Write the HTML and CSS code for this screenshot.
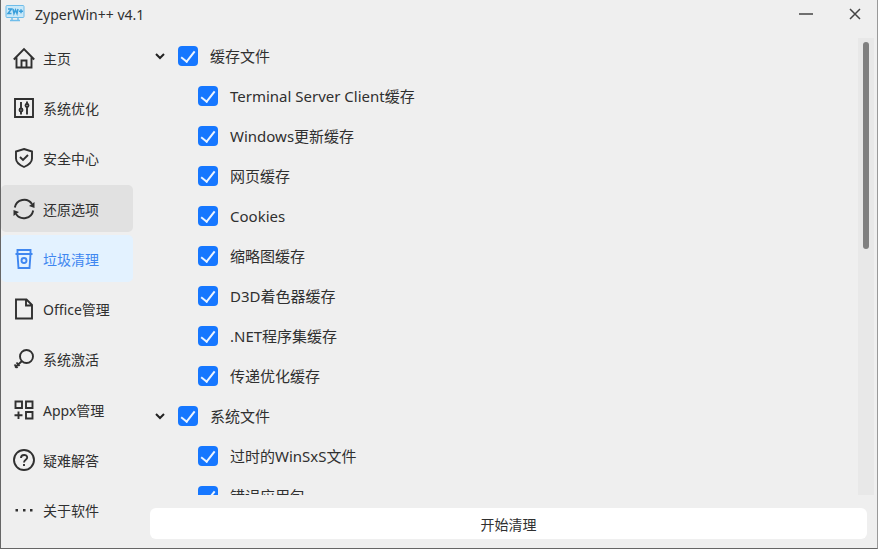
FILE: index.html
```html
<!DOCTYPE html>
<html lang="zh-CN">
  <head>
    <meta charset="UTF-8" />
    <title>ZyperWin++ v4.1</title>
    <link rel="stylesheet" href="styles.css">
  </head>
  <body>
    <div class="window">
      <header class="titlebar">
        <svg class="logo" viewBox="0 0 20 20">
          <rect x="1" y="1.500" width="18" height="12" rx="1" fill="#c9e8f8" stroke="#6fbdea" />
          <path d="M3 5h3.500L3 9.500h3.500M8 5l1 4.500 1.500-3.500 1.500 3.500 1-4.500M14 7.300h4M16 5.300v4" fill="none" stroke="#3a9fdb" stroke-width="1.500" />
          <path d="M7 14v3M13 14v3M5 16.500h10" fill="none" stroke="#6fbdea" stroke-width="1.500" />
        </svg>
        <span class="title">ZyperWin++ v4.1</span>
        <button class="win-btn" aria-label="最小化">
          <svg viewBox="0 0 14 14"><path d="M0 7h14" /></svg>
        </button>
        <button class="win-btn" aria-label="关闭">
          <svg viewBox="0 0 14 14"><path d="M2 2l10 10M12 2L2 12" /></svg>
        </button>
      </header>

      <div class="body">
        <nav class="sidebar">
          <a class="nav-item" href="#home">
            <svg class="icon" viewBox="0 0 22 22"><path d="M.8 12.500L11 2l10.200 10.500M3.500 10.500V20.500h15V10.500M8.500 20.500v-7h5v7" /></svg>
            主页
          </a>
          <a class="nav-item" href="#optimize">
            <svg class="icon" viewBox="0 0 22 22"><path d="M2 2h18v18H2zM8 5v6M8 15v2.500M14 4.500v2.500M14 10v7.500" /><circle cx="8" cy="13" r="1.500" /><circle cx="14" cy="8.500" r="1.500" /></svg>
            系统优化
          </a>
          <a class="nav-item" href="#security">
            <svg class="icon" viewBox="0 0 22 22"><path d="M11 2l8 2.500v7c0 4-3.500 6.500-8 8.500-4.500-2-8-4.500-8-8.500v-7zM7 10l3 3 5-5" /></svg>
            安全中心
          </a>
          <a class="nav-item hover" href="#restore">
            <svg class="icon" viewBox="0 0 22 22"><path d="M1.800 9.500A9.500 9.500 0 0 1 19 6M20.200 12.500A9.500 9.500 0 0 1 3 16" /><path class="solid" d="M21.500 4v6l-5.500-2zM.5 18v-6l5.500 2z" /></svg>
            还原选项
          </a>
          <a class="nav-item active" href="#clean">
            <svg class="icon" viewBox="0 0 22 22"><path d="M4.500 6V2h13v4M2.500 6h17M4.500 6l1 14h11l1-14" /><circle cx="11" cy="12.500" r="2.500" /></svg>
            垃圾清理
          </a>
          <a class="nav-item" href="#office">
            <svg class="icon" viewBox="0 0 22 22"><path d="M3 1.500h10.500l5.500 5.500v13.500H3zM13 1.500V7.500h6" /></svg>
            Office管理
          </a>
          <a class="nav-item" href="#activate">
            <svg class="icon" viewBox="0 0 22 22"><circle cx="13.500" cy="8.500" r="6.500" /><path d="M9 13l-7 6.500M3.500 14.500l3 3.500M1.500 16.500l3 3.500" /></svg>
            系统激活
          </a>
          <a class="nav-item" href="#appx">
            <svg class="icon" viewBox="0 0 22 22"><path d="M2.500 2.500h6.500v6.500H2.500zM13 2.500h6.500v6.500H13zM13 13h6.500v6.500H13zM1.500 16.250h8M5.500 12.500v7.500" /></svg>
            Appx管理
          </a>
          <a class="nav-item" href="#help">
            <svg class="icon" viewBox="0 0 22 22"><circle cx="11" cy="11" r="10" /><path d="M8 9c0-4 6.200-4 6.200-.5 0 2.300-3.200 2.300-3.200 5M11 15v2" /></svg>
            疑难解答
          </a>
          <a class="nav-item" href="#about">
            <svg class="icon" viewBox="0 0 22 22"><path class="solid" d="M2.500 10h2.500v2.500H2.500zM10 10h2.500v2.500H10zM17 10h2.500v2.500H17z" /></svg>
            关于软件
          </a>
        </nav>

        <main class="content">
          <div class="panel">
            <div class="tree">
              <div class="row group">
                <svg class="arrow" viewBox="0 0 10 10"><path d="M1 3l4 4 4-4" /></svg>
                <label><input type="checkbox" checked />缓存文件</label>
              </div>
              <div class="row"><label><input type="checkbox" checked />Terminal Server Client缓存</label></div>
              <div class="row"><label><input type="checkbox" checked />Windows更新缓存</label></div>
              <div class="row"><label><input type="checkbox" checked />网页缓存</label></div>
              <div class="row"><label><input type="checkbox" checked />Cookies</label></div>
              <div class="row"><label><input type="checkbox" checked />缩略图缓存</label></div>
              <div class="row"><label><input type="checkbox" checked />D3D着色器缓存</label></div>
              <div class="row"><label><input type="checkbox" checked />.NET程序集缓存</label></div>
              <div class="row"><label><input type="checkbox" checked />传递优化缓存</label></div>
              <div class="row group">
                <svg class="arrow" viewBox="0 0 10 10"><path d="M1 3l4 4 4-4" /></svg>
                <label><input type="checkbox" checked />系统文件</label>
              </div>
              <div class="row"><label><input type="checkbox" checked />过时的WinSxS文件</label></div>
              <div class="row"><label><input type="checkbox" checked />错误应用包</label></div>
            </div>
            <div class="scrollbar"><div class="thumb"></div></div>
          </div>
          <button class="start-btn">开始清理</button>
        </main>
      </div>
    </div>
  </body>
</html>
```
FILE: styles.css
```css
:root {
  --bg: #efefef;
  --text: #303030;
  --blue: #1677ff;
}

* {
  box-sizing: border-box;
}

body {
  margin: 0;
  font-family: "Noto Sans", "Noto Sans CJK SC", sans-serif;
  font-size: 14px;
  color: var(--text);
}

.window {
  display: flex;
  flex-direction: column;
  height: 100vh;
  background: var(--bg);
  border: 1px solid #666;
  border-top: none;
  border-right-color: #999;
  overflow: hidden;
}

.titlebar {
  display: flex;
  align-items: center;
  height: 28px;
  padding-left: 4px;
  flex-shrink: 0;
}

.logo {
  width: 20px;
  height: 20px;
  margin-right: 10px;
}

.title {
  flex: 1;
}

.win-btn {
  width: 49px;
  height: 28px;
  padding: 0 0 0 4px;
  border: none;
  background: none;
}

.win-btn svg {
  display: block;
  width: 14px;
  height: 14px;
  margin: auto;
  fill: none;
  stroke: #444;
  stroke-width: 1.5;
}

.body {
  display: flex;
  flex: 1;
  min-height: 0;
}

.sidebar {
  display: flex;
  flex-direction: column;
  gap: 3px;
  width: 132px;
  padding: 6px 0 14px;
}

.nav-item {
  display: flex;
  flex: 1;
  align-items: center;
  gap: 8px;
  padding-left: 12px;
  border-radius: 5px;
  color: var(--text);
  text-decoration: none;
}

.nav-item.hover {
  background: #e1e1e1;
}

.nav-item.active {
  background: #e3f2ff;
  color: #3f87f0;
}

.icon {
  width: 22px;
  height: 22px;
  fill: none;
  stroke: currentColor;
  stroke-width: 1.9;
}

.icon .solid {
  fill: currentColor;
  stroke: none;
}

.content {
  display: flex;
  flex: 1;
  flex-direction: column;
  min-width: 0;
  padding: 8px 3px 9px 17px;
}

.panel {
  display: flex;
  flex: 1;
  min-height: 0;
}

.tree {
  flex: 1;
  overflow: hidden;
  font-size: 15px;
}

.row {
  display: flex;
  align-items: center;
  height: 40px;
  padding-left: 48px;
}

.row.group {
  padding-left: 5px;
  gap: 13px;
}

.row label {
  display: flex;
  align-items: center;
  gap: 12px;
  line-height: 20px;
}

.arrow {
  width: 10px;
  height: 10px;
  fill: none;
  stroke: #222;
  stroke-width: 2;
}

input[type="checkbox"] {
  appearance: none;
  position: relative;
  width: 20px;
  height: 20px;
  margin: 0;
  border-radius: 4px;
  background: var(--blue);
}

input[type="checkbox"]:not(:checked) {
  background: white;
  border: 1px solid #bbb;
}

input[type="checkbox"]:checked::after {
  content: "";
  position: absolute;
  left: 6px;
  top: 2px;
  width: 6px;
  height: 12px;
  border: solid #eef5ff;
  border-width: 0 2px 2px 0;
  transform: rotate(38deg);
}

.scrollbar {
  width: 16px;
  margin-top: 2px;
  padding: 4px 5px;
  background: #e8e8e8;
}

.thumb {
  height: 46%;
  border-radius: 3px;
  background: #808080;
}

.start-btn {
  height: 31px;
  margin: 13px 7px 0 0;
  border: none;
  border-radius: 6px;
  background: white;
  color: var(--text);
  font: inherit;
}
```
